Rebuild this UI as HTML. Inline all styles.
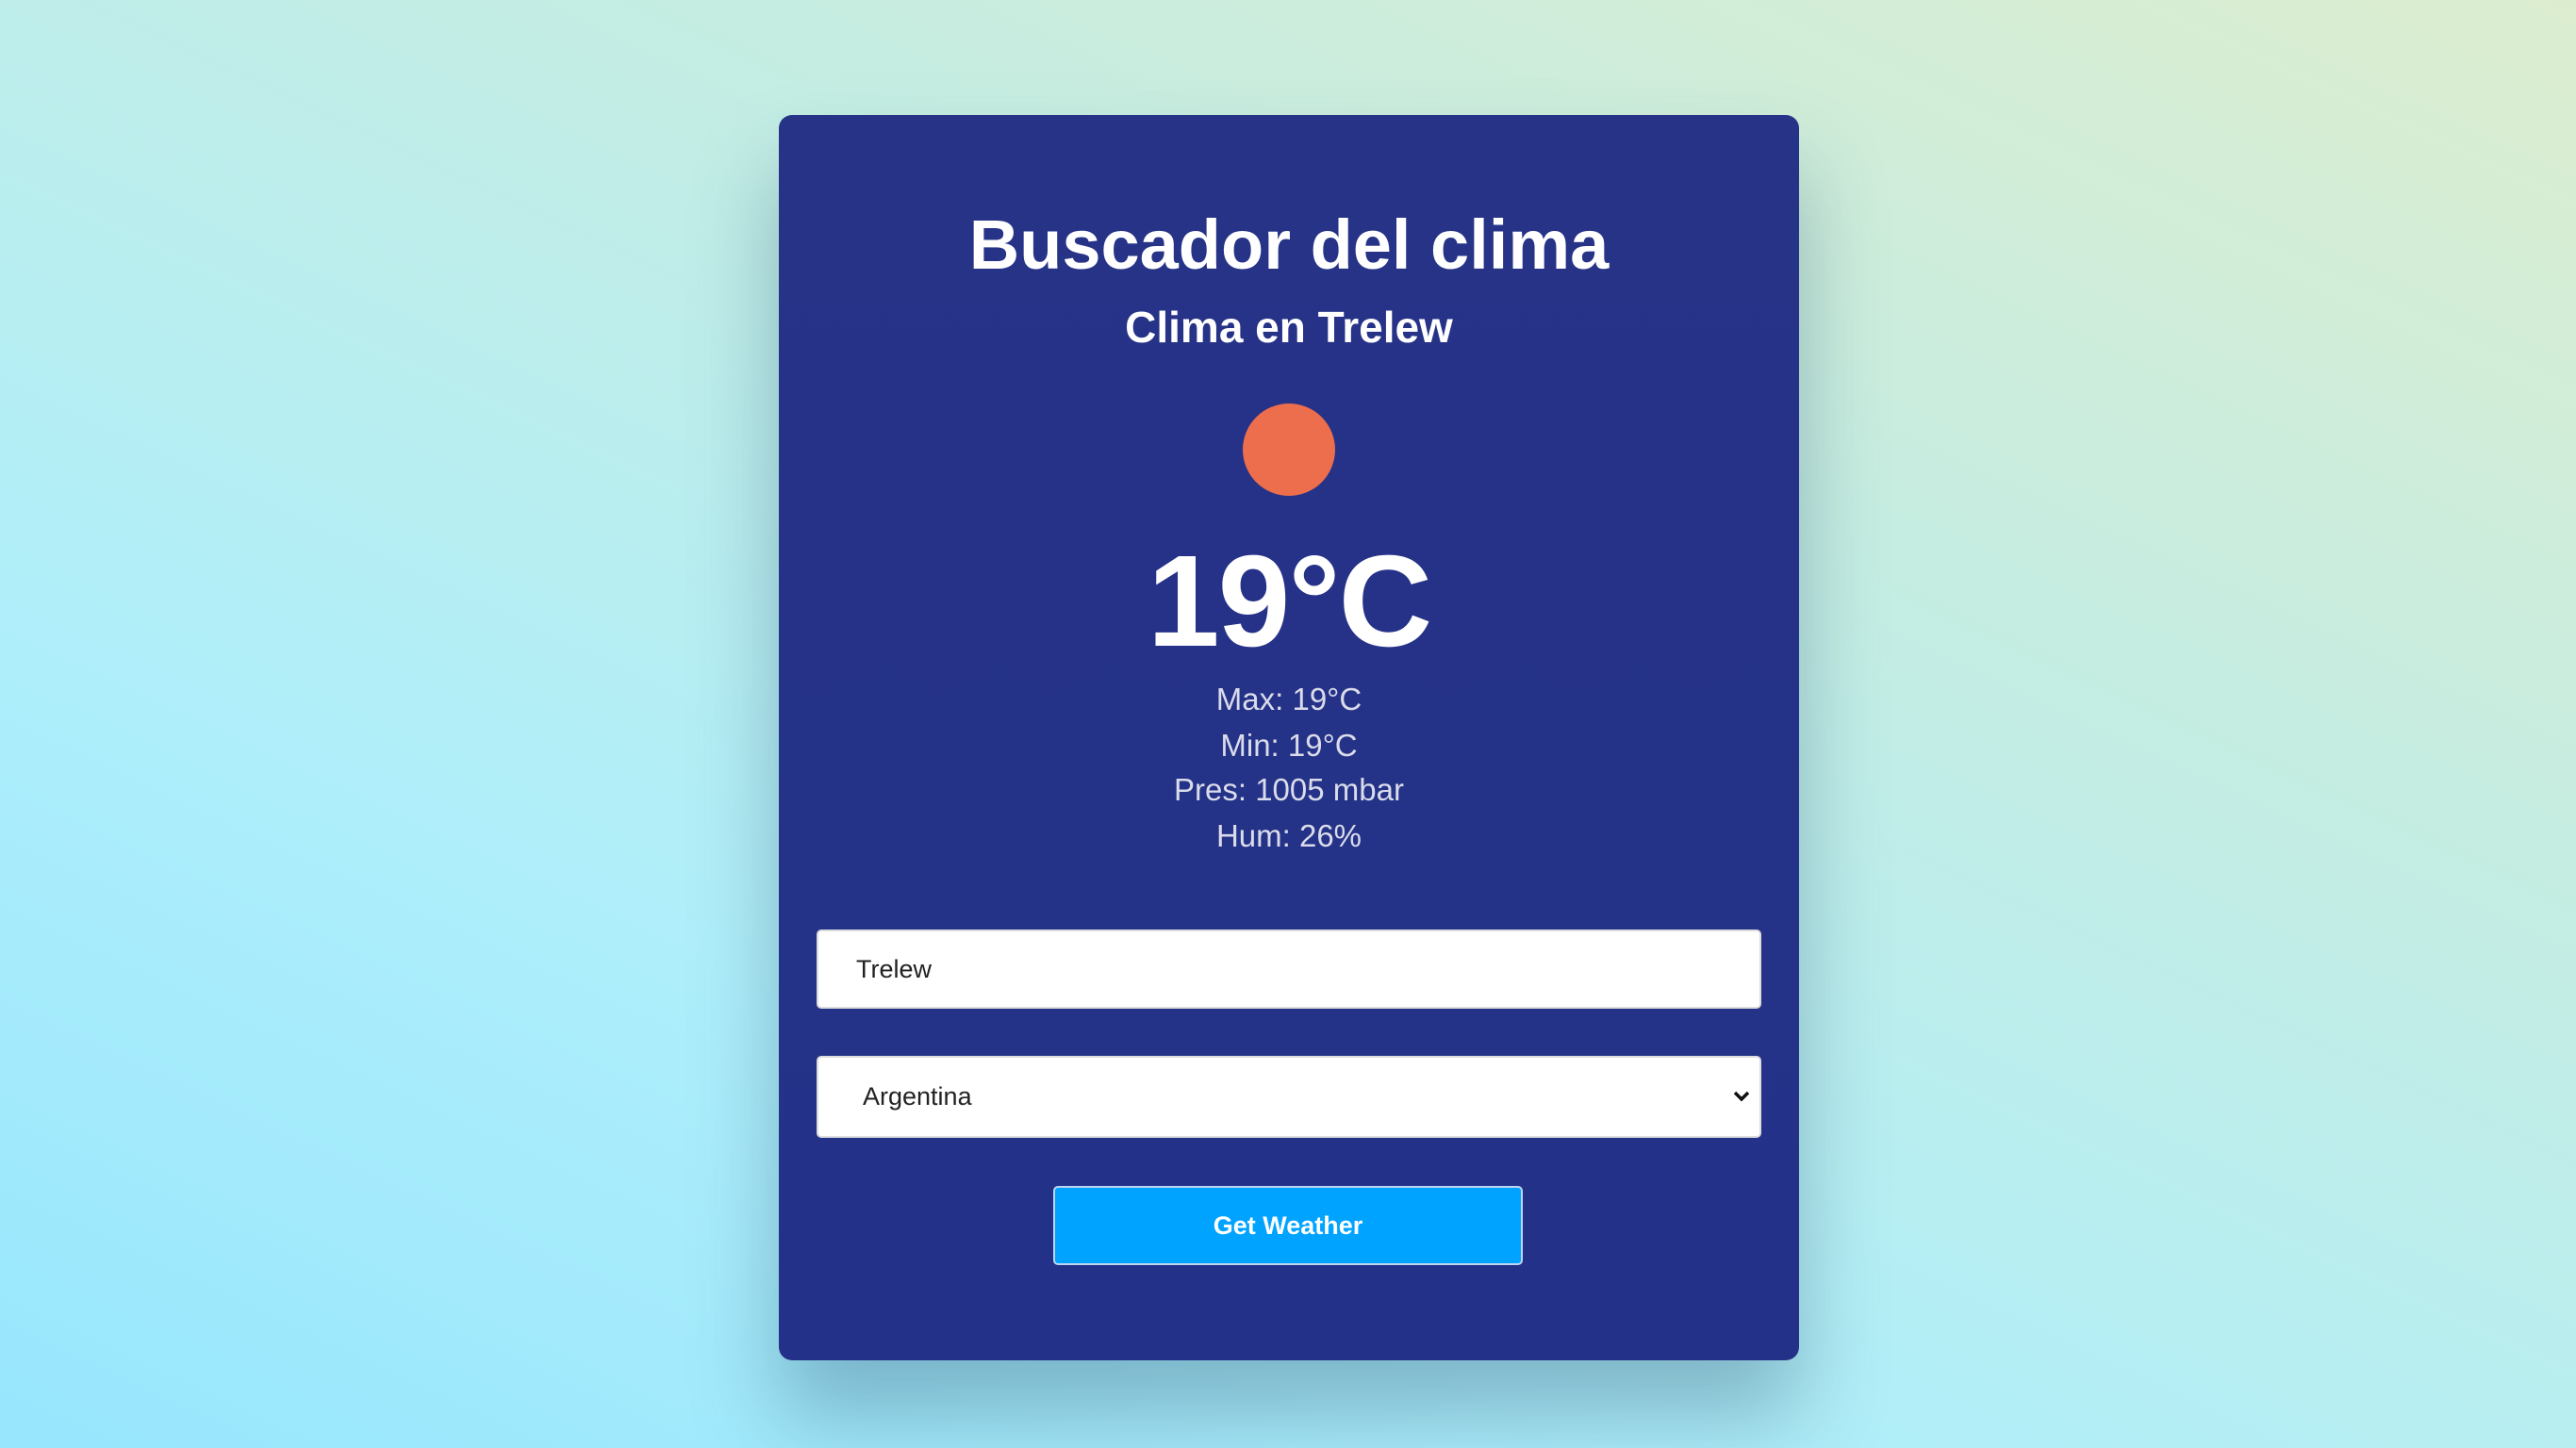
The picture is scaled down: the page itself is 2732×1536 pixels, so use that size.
<!DOCTYPE html>
<html><head><meta charset="utf-8"><style>
html,body{margin:0;padding:0;}
body{width:2732px;height:1536px;overflow:hidden;position:relative;
background:linear-gradient(25deg,#97e6fd 0%,#aeeefb 30%,#c4ede3 65%,#dcedcf 100%);
font-family:"Liberation Sans",sans-serif;}
.card{position:absolute;left:826px;top:122px;width:1082px;height:1321px;background:linear-gradient(180deg,#263387 0%,#233189 100%);border-radius:14px;box-shadow:0 60px 90px rgba(40,80,110,0.35);}
.t{position:absolute;left:0;width:100%;text-align:center;color:#fff;white-space:nowrap;}
.h1{top:93px;font-size:74px;font-weight:bold;line-height:90px;}
.h2{top:198px;font-size:46px;font-weight:bold;line-height:54px;}
.sun{position:absolute;left:492px;top:306px;width:98px;height:98px;border-radius:50%;background:#ec6e4c;}
.temp{top:436px;font-size:138px;font-weight:bold;line-height:160px;letter-spacing:-2px;}
.d{font-size:33px;color:#dadcea;line-height:40px;}
.inp{position:absolute;left:40px;width:1002px;background:#fff;border:2px solid #ddd;border-radius:5px;box-sizing:border-box;font-size:27px;color:#222;}
.btn{position:absolute;left:291px;top:1136px;width:498px;height:84px;background:#00a3ff;border:2px solid #bcd6f0;border-radius:5px;box-sizing:border-box;color:#fff;font-weight:bold;font-size:27px;text-align:center;line-height:80px;}
</style></head><body>
<div class="card">
<div class="t h1">Buscador del clima</div>
<div class="t h2">Clima en Trelew</div>
<div class="sun"></div>
<div class="t temp">19°C</div>
<div class="t d" style="top:600px">Max: 19°C</div>
<div class="t d" style="top:649px">Min: 19°C</div>
<div class="t d" style="top:696px">Pres: 1005 mbar</div>
<div class="t d" style="top:745px">Hum: 26%</div>
<div class="inp" style="top:864px;height:84px;line-height:80px;padding-left:40px;">Trelew</div>
<div class="inp" style="top:998px;height:87px;line-height:83px;padding-left:47px;">Argentina
<svg style="position:absolute;right:10px;top:34px" width="18" height="14" viewBox="0 0 18 14"><path d="M2 3 L9 10 L16 3" stroke="#111" stroke-width="3.5" fill="none"/></svg></div>
<div class="btn">Get Weather</div>
</div>
</body></html>
